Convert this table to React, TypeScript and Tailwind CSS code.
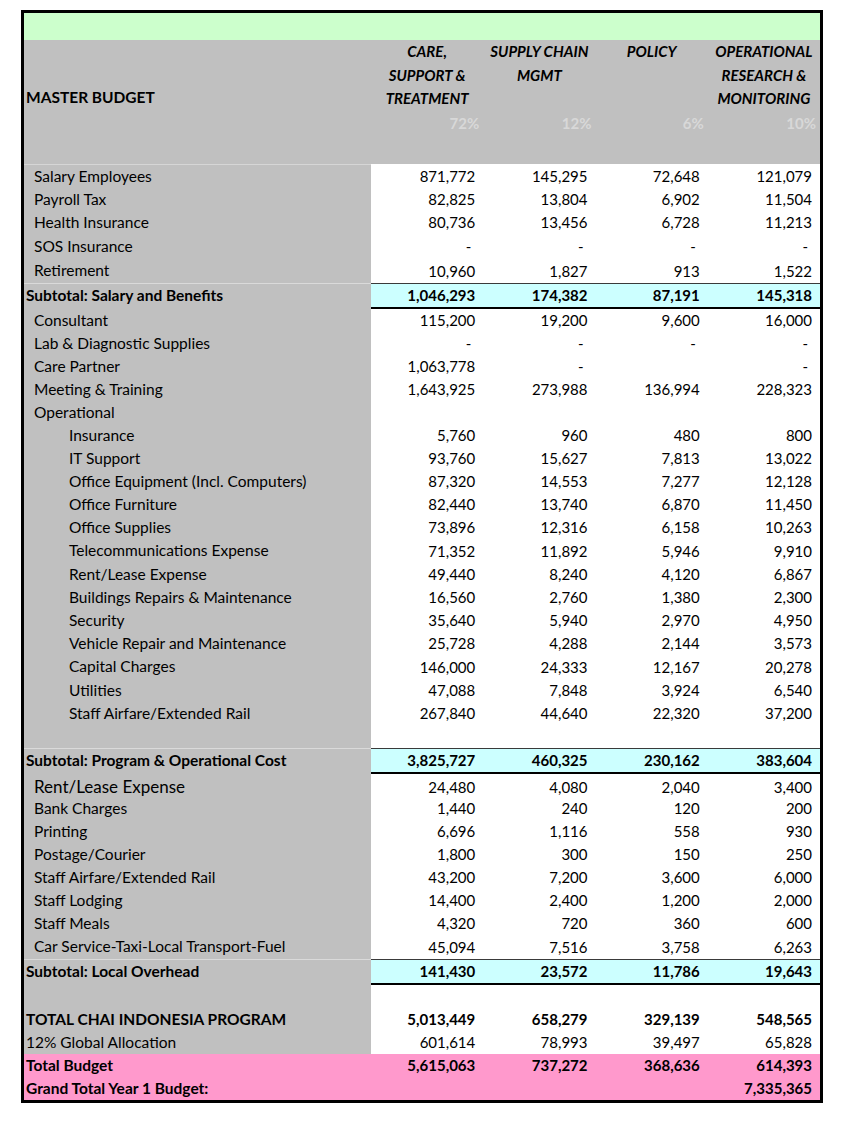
type Kind = "item" | "sub" | "subtotal" | "blank" | "total" | "plain" | "pink";

type Row = {
  label: string;
  v?: string[];
  kind: Kind;
  h: 23 | 24 | 25 | 26;
  big?: boolean;
};

const heights = {
  23: "h-[23px]",
  24: "h-[24px]",
  25: "h-[25px]",
  26: "h-[26px]",
};

const rows: Row[] = [
  { label: "Salary Employees", v: ["871,772", "145,295", "72,648", "121,079"], kind: "item", h: 24 },
  { label: "Payroll Tax", v: ["82,825", "13,804", "6,902", "11,504"], kind: "item", h: 23 },
  { label: "Health Insurance", v: ["80,736", "13,456", "6,728", "11,213"], kind: "item", h: 23 },
  { label: "SOS Insurance", v: ["-", "-", "-", "-"], kind: "item", h: 25 },
  { label: "Retirement", v: ["10,960", "1,827", "913", "1,522"], kind: "item", h: 24 },
  { label: "Subtotal: Salary and Benefits", v: ["1,046,293", "174,382", "87,191", "145,318"], kind: "subtotal", h: 26 },
  { label: "Consultant", v: ["115,200", "19,200", "9,600", "16,000"], kind: "item", h: 23 },
  { label: "Lab & Diagnostic Supplies", v: ["-", "-", "-", "-"], kind: "item", h: 23 },
  { label: "Care Partner", v: ["1,063,778", "-", "", "-"], kind: "item", h: 23 },
  { label: "Meeting & Training", v: ["1,643,925", "273,988", "136,994", "228,323"], kind: "item", h: 23 },
  { label: "Operational", kind: "item", h: 23 },
  { label: "Insurance", v: ["5,760", "960", "480", "800"], kind: "sub", h: 23 },
  { label: "IT Support", v: ["93,760", "15,627", "7,813", "13,022"], kind: "sub", h: 23 },
  { label: "Office Equipment (Incl. Computers)", v: ["87,320", "14,553", "7,277", "12,128"], kind: "sub", h: 23 },
  { label: "Office Furniture", v: ["82,440", "13,740", "6,870", "11,450"], kind: "sub", h: 23 },
  { label: "Office Supplies", v: ["73,896", "12,316", "6,158", "10,263"], kind: "sub", h: 23 },
  { label: "Telecommunications Expense", v: ["71,352", "11,892", "5,946", "9,910"], kind: "sub", h: 24 },
  { label: "Rent/Lease Expense", v: ["49,440", "8,240", "4,120", "6,867"], kind: "sub", h: 23 },
  { label: "Buildings Repairs & Maintenance", v: ["16,560", "2,760", "1,380", "2,300"], kind: "sub", h: 23 },
  { label: "Security", v: ["35,640", "5,940", "2,970", "4,950"], kind: "sub", h: 23 },
  { label: "Vehicle Repair and Maintenance", v: ["25,728", "4,288", "2,144", "3,573"], kind: "sub", h: 23 },
  { label: "Capital Charges", v: ["146,000", "24,333", "12,167", "20,278"], kind: "sub", h: 24 },
  { label: "Utilities", v: ["47,088", "7,848", "3,924", "6,540"], kind: "sub", h: 23 },
  { label: "Staff Airfare/Extended Rail", v: ["267,840", "44,640", "22,320", "37,200"], kind: "sub", h: 23 },
  { label: "", kind: "blank", h: 23 },
  { label: "Subtotal: Program & Operational Cost", v: ["3,825,727", "460,325", "230,162", "383,604"], kind: "subtotal", h: 26 },
  { label: "Rent/Lease Expense", v: ["24,480", "4,080", "2,040", "3,400"], kind: "item", h: 23, big: true },
  { label: "Bank Charges", v: ["1,440", "240", "120", "200"], kind: "item", h: 23 },
  { label: "Printing", v: ["6,696", "1,116", "558", "930"], kind: "item", h: 23 },
  { label: "Postage/Courier", v: ["1,800", "300", "150", "250"], kind: "item", h: 23 },
  { label: "Staff Airfare/Extended Rail", v: ["43,200", "7,200", "3,600", "6,000"], kind: "item", h: 23 },
  { label: "Staff Lodging", v: ["14,400", "2,400", "1,200", "2,000"], kind: "item", h: 23 },
  { label: "Staff Meals", v: ["4,320", "720", "360", "600"], kind: "item", h: 23 },
  { label: "Car Service-Taxi-Local Transport-Fuel", v: ["45,094", "7,516", "3,758", "6,263"], kind: "item", h: 24 },
  { label: "Subtotal: Local Overhead", v: ["141,430", "23,572", "11,786", "19,643"], kind: "subtotal", h: 26 },
  { label: "", kind: "blank", h: 23 },
  { label: "TOTAL CHAI INDONESIA PROGRAM", v: ["5,013,449", "658,279", "329,139", "548,565"], kind: "total", h: 23 },
  { label: "12% Global Allocation", v: ["601,614", "78,993", "39,497", "65,828"], kind: "plain", h: 23 },
  { label: "Total Budget", v: ["5,615,063", "737,272", "368,636", "614,393"], kind: "pink", h: 23 },
  { label: "Grand Total Year 1 Budget:", v: ["", "", "", "7,335,365"], kind: "pink", h: 23 },
];

const columns = [
  { title: ["CARE,", "SUPPORT &", "TREATMENT"], pct: "72%" },
  { title: ["SUPPLY CHAIN", "MGMT"], pct: "12%" },
  { title: ["POLICY"], pct: "6%" },
  { title: ["OPERATIONAL", "RESEARCH &", "MONITORING"], pct: "10%" },
];

function labelClass(row: Row, first: boolean) {
  const base = "flex items-center whitespace-nowrap text-[15.5px]";
  switch (row.kind) {
    case "subtotal":
      return `${base} bg-[#c0c0c0] pl-[2px] pb-[3px] font-bold border-t border-t-[#dadada]`;
    case "total":
      return `${base} bg-[#c0c0c0] pl-[2px] font-bold`;
    case "plain":
      return `${base} bg-[#c0c0c0] pl-[2px]`;
    case "pink":
      return `${base} bg-[#ff99cc] pl-[2px] font-bold`;
    case "sub":
      return `${base} bg-[#c0c0c0] pl-[45px]`;
    default:
      return `${base} bg-[#c0c0c0] pl-[10px] ${first ? "border-t border-t-[#d6d6d6]" : ""}`;
  }
}

function valueClass(row: Row, v: string) {
  const base = "flex items-center justify-end whitespace-nowrap";
  const pad = v === "-" ? "pr-[12px]" : "pr-[8px]";
  switch (row.kind) {
    case "subtotal":
      return `${base} ${pad} bg-[#ccffff] font-bold border-t border-t-[#3a3a3a] border-b-[3px] border-b-black`;
    case "total":
      return `${base} ${pad} bg-white font-bold`;
    case "plain":
      return `${base} ${pad} bg-white border-b border-b-black`;
    case "pink":
      return `${base} ${pad} bg-[#ff99cc] font-bold`;
    default:
      return `${base} ${pad} bg-white`;
  }
}

export default function App() {
  return (
    <div className="min-h-[1121px] bg-white pt-[10px] pl-[21px] font-['Lato',sans-serif] text-[15px] text-black">
      <div className="w-[802px] border-[3px] border-black">
        <div className="h-[27px] bg-[#ccffcc]" />
        <div className="grid h-[124px] grid-cols-[347px_repeat(4,1fr)] bg-[#c0c0c0]">
          <div className="pl-[2px] pt-[46px] text-[15.5px] font-bold leading-[23px]">MASTER BUDGET</div>
          {columns.map((c) => (
            <div key={c.pct} className="flex flex-col">
              <div className="h-[72px] text-center font-bold italic leading-[23.5px]">
                {c.title.map((t) => (
                  <div key={t}>{t}</div>
                ))}
              </div>
              <div className="pr-[4px] text-right font-bold leading-[23px] text-[#d8d8d8]">{c.pct}</div>
            </div>
          ))}
        </div>
        {rows.map((row, i) => (
          <div key={i} className={`grid grid-cols-[347px_repeat(4,1fr)] ${heights[row.h]}`}>
            <div className={labelClass(row, i === 0)}>
              <span className={row.big ? "text-[17px]" : ""}>{row.label}</span>
            </div>
            {[0, 1, 2, 3].map((j) => {
              const v = row.v ? row.v[j] : "";
              return (
                <div key={j} className={valueClass(row, v)}>
                  {v}
                </div>
              );
            })}
          </div>
        ))}
      </div>
    </div>
  );
}
